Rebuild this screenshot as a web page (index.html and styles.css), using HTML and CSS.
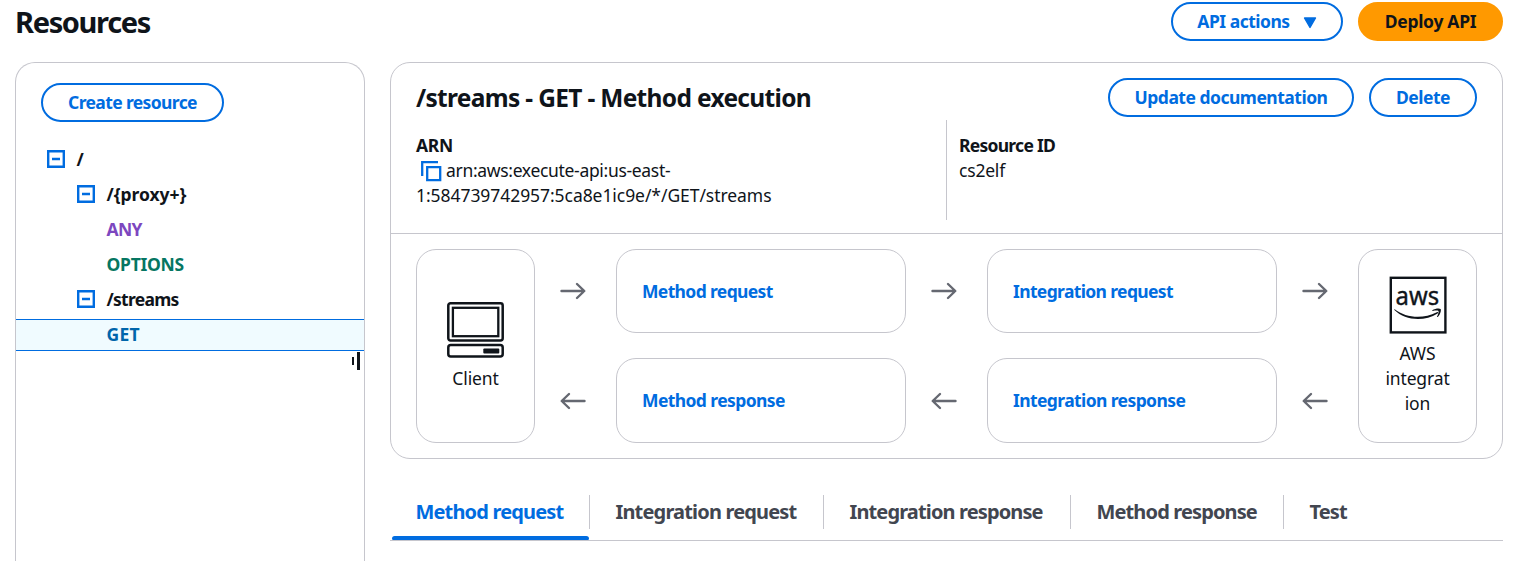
FILE: index.html
```html
<!DOCTYPE html>
<html lang="en">
<head>
<meta charset="utf-8">
<title>Resources</title>
<link rel="stylesheet" href="styles.css">
</head>
<body>
<svg class="defs" width="0" height="0">
  <symbol id="collapse" viewBox="0 0 18 18"><path d="M1.2 1.2H16.8V16.8H1.2ZM5 9H13" fill="none" stroke="currentColor" stroke-width="2.4"/></symbol>
  <symbol id="right" viewBox="0 0 26 18"><path d="M1.5 9H24M17 2L24.3 9L17 16" fill="none" stroke="currentColor" stroke-width="2.4" stroke-linecap="round" stroke-linejoin="round"/></symbol>
  <symbol id="left" viewBox="0 0 26 18"><path d="M24.5 9H2M9 2L1.7 9L9 16" fill="none" stroke="currentColor" stroke-width="2.4" stroke-linecap="round" stroke-linejoin="round"/></symbol>
</svg>
<header class="page-header">
  <h1>Resources</h1>
  <div class="actions">
    <button class="btn api"><span>API actions</span><svg width="14" height="12" viewBox="0 0 14 12"><path d="M1.5 1H12.5L7 10.5Z" fill="currentColor" stroke="currentColor" stroke-width="1.4" stroke-linejoin="round"/></svg></button>
    <button class="btn primary"><span>Deploy API</span></button>
  </div>
</header>
<div class="columns">
  <aside class="sidebar">
    <button class="btn create"><span>Create resource</span></button>
    <ul class="tree">
      <li class="root"><svg><use href="#collapse"/></svg><span>/</span></li>
      <li class="path"><svg><use href="#collapse"/></svg><span class="proxy">/{proxy+}</span></li>
      <li class="method any"><span>ANY</span></li>
      <li class="method options"><span>OPTIONS</span></li>
      <li class="path"><svg><use href="#collapse"/></svg><span>/streams</span></li>
      <li class="method get"><span>GET</span></li>
    </ul>
    <div class="resize"><i class="short"></i><i class="long"></i></div>
  </aside>
  <main>
    <section class="panel">
      <div class="panel-head">
        <h2>/streams - GET - Method execution</h2>
        <div class="actions">
          <button class="btn update"><span>Update documentation</span></button>
          <button class="btn delete"><span>Delete</span></button>
        </div>
      </div>
      <dl class="details">
        <div class="arn">
          <dt>ARN</dt>
          <dd><svg class="copy" viewBox="0 0 21 21"><path d="M1.2 15V1.2H17M6.2 6.2H19.2V19.2H6.2Z" fill="none" stroke="currentColor" stroke-width="2.3"/></svg><span class="arn-a">arn:aws:execute-api:us-east-</span><br>1:584739742957:5ca8e1ic9e/*/GET/streams</dd>
        </div>
        <div class="rid"><dt class="rid-label">Resource ID</dt><dd class="rid-value">cs2elf</dd></div>
      </dl>
      <div class="flow">
        <div class="node end">
          <svg width="58" height="58" viewBox="0.7 -0.2 58 58" fill="none" stroke="#0f141a"><rect x="2" y="2" width="54.4" height="37.2" rx="2.2" stroke-width="2.5"/><rect x="6.6" y="6.6" width="45.4" height="28.4" stroke-width="2.3"/><rect x="2" y="43.8" width="54.4" height="11.4" rx="2.5" stroke-width="2.5"/><rect x="37" y="47.2" width="16" height="5" rx="1" fill="#0f141a" stroke="none"/></svg>
          <span>Client</span>
        </div>
        <svg class="arrow"><use href="#right"/></svg>
        <a class="node mreq">Method request</a>
        <svg class="arrow"><use href="#right"/></svg>
        <a class="node ireq">Integration request</a>
        <svg class="arrow"><use href="#right"/></svg>
        <div class="node end aws">
          <svg width="58" height="58" viewBox="-1 -1 58 58"><rect x=".8" y=".8" width="54.6" height="54.6" fill="none" stroke="#0f141a" stroke-width="2.4"/><text class="aws-word" x="5.6" y="28" textLength="43.5" lengthAdjust="spacingAndGlyphs">aws</text><path d="M4.7 32.2C16 41 33 42.2 46.8 35.2C48 34.7 48.6 35.7 47.6 36.4C34 45 15 43.5 4.4 33Q4 32 4.7 32.2Z" fill="#0f141a"/><path d="M42.3 33.2C45 31.4 49.6 31 50.6 32C51.5 33.2 50.2 37.8 47.8 39.9C47.2 40.3 46.8 40 47.1 39.4C48.2 37 49 34.8 48.4 34C47.8 33.3 45.2 33.5 42.7 33.9Q41.9 33.8 42.3 33.2Z" fill="#0f141a"/></svg>
          <span>AWS integration</span>
        </div>
        <svg class="arrow"><use href="#left"/></svg>
        <a class="node mres">Method response</a>
        <svg class="arrow"><use href="#left"/></svg>
        <a class="node ires">Integration response</a>
        <svg class="arrow"><use href="#left"/></svg>
      </div>
    </section>
    <nav class="tabs">
      <a class="tab active">Method request</a>
      <a class="tab t2">Integration request</a>
      <a class="tab t3">Integration response</a>
      <a class="tab t4">Method response</a>
      <a class="tab t5">Test</a>
    </nav>
  </main>
</div>
</body>
</html>
```
FILE: styles.css
```css
* { box-sizing: border-box; }
body {
  margin: 0;
  height: 561px;
  overflow: hidden;
  background: #fff;
  color: #0f141a;
  font: 17.5px/25px "Noto Sans", "Open Sans", sans-serif;
}
h1, h2, dl, dd, ul { margin: 0; padding: 0; }
.defs { display: block; }
.page-header {
  display: flex;
  justify-content: space-between;
  height: 62px;
  padding: 2px 18px 0 15px;
}
h1 { font-size: 29px; line-height: 39px; font-weight: 700; letter-spacing: -1.35px; }
h2 { font-size: 24.5px; line-height: 39px; font-weight: 700; letter-spacing: -.68px; }
.actions { display: flex; gap: 15px; }
.btn {
  display: flex;
  align-items: center;
  justify-content: center;
  height: 39px;
  padding: 0;
  border: 2px solid #006ce0;
  border-radius: 20px;
  background: #fff;
  color: #006ce0;
  font: inherit;
  font-weight: 700;
}
.api { width: 172px; gap: 13px; letter-spacing: -.5px; }
.api svg { margin-top: 2px; }
.primary { width: 145px; background: #f90; border-color: #f90; color: #0f141a; letter-spacing: -.29px; }
.update { width: 246px; letter-spacing: -.5px; }
.delete { width: 108px; letter-spacing: -.5px; }
.create { width: 183px; margin-left: 25px; letter-spacing: -.62px; }
.columns { display: grid; grid-template-columns: 350px 1113px; gap: 25px; height: 499px; padding-left: 15px; }
.sidebar {
  height: 499px;
  padding-top: 20px;
  border: 1px solid #c6c6cd;
  border-bottom: 0;
  border-radius: 20px 20px 0 0;
}
.tree { list-style: none; margin-top: 20px; font-weight: 700; }
.tree li { display: flex; align-items: center; gap: 11.5px; height: 35px; padding-bottom: 1px; }
.tree svg { width: 18px; height: 18px; color: #006ce0; }
.tree .root { padding-left: 31px; }
.tree .path { padding-left: 61px; letter-spacing: -.73px; }
.tree .proxy { letter-spacing: -.05px; }
.tree .method { padding-left: 90.5px; }
.tree .any { color: #7d47bf; letter-spacing: -.67px; }
.tree .options { color: #067662; letter-spacing: -.28px; }
.tree .get {
  height: 32px;
  margin-top: 2px;
  padding-bottom: 1px;
  background: #f0fbff;
  border-top: 1px solid #006ce0;
  border-bottom: 1px solid #006ce0;
  color: #0065ab;
  letter-spacing: .3px;
}
.resize { display: flex; justify-content: flex-end; align-items: center; gap: 3px; padding: 1px 4px 0 0; }
.resize i { width: 3px; background: #0f141a; }
.resize .short { height: 8px; width: 2px; }
.resize .long { height: 18px; }
.panel { height: 397px; border: 1px solid #c6c6cd; border-radius: 20px; }
.panel-head { display: flex; justify-content: space-between; padding: 15px 25px 0; }
.details { display: grid; grid-template-columns: 530px 1fr; padding: 3px 0 13px 25px; border-bottom: 1px solid #c6c6cd; }
.details > div { height: 100px; padding-top: 13px; }
.details .rid { padding-left: 12px; border-left: 1px solid #c6c6cd; }
dt { font-weight: 700; letter-spacing: -.29px; }
.rid-label { letter-spacing: -.73px; }
.rid-value { letter-spacing: -.2px; }
.copy { width: 21px; height: 21px; margin: 0 4px 0 5px; vertical-align: -5px; color: #006ce0; }
.arn dd { line-height: 25px; letter-spacing: -.06px; }
.arn-a { letter-spacing: -.32px; }
.flow {
  display: grid;
  grid-template-columns: 119px 81px 290px 81px 290px 81px 119px;
  grid-template-rows: 84px 85px;
  row-gap: 25px;
  padding: 15px 25px 0;
}
.node {
  display: flex;
  align-items: center;
  padding: 0 25px;
  border: 1px solid #c6c6cd;
  border-radius: 20px;
  color: #006ce0;
  font-weight: 700;
}
.end { grid-row: 1 / 3; flex-direction: column; justify-content: center; gap: 7px; color: #0f141a; font-weight: 400; }
.end span { width: 66px; text-align: center; overflow-wrap: anywhere; letter-spacing: -.14px; }
.flow .aws { grid-column: 7; grid-row: 1 / 3; }
.aws-word { font: 26px "Noto Sans", sans-serif; fill: #0f141a; stroke: #0f141a; stroke-width: .4px; }
.arrow { width: 26px; height: 18px; margin-left: 24.5px; align-self: center; color: #656871; }
.mreq, .ireq { letter-spacing: -.64px; }
.mres, .ires { letter-spacing: -.6px; }
.tabs { display: flex; height: 46px; margin-top: 36px; border-bottom: 1px solid #c6c6cd; font-size: 20px; font-weight: 700; color: #424650; }
.tab { height: 34px; line-height: 34px; padding-left: 25.5px; border-right: 1px solid #c6c6cd; white-space: nowrap; }
.active { position: relative; width: 200px; color: #006ce0; letter-spacing: -.84px; }
.active::after { content: ""; position: absolute; left: 2px; right: 0; top: 41px; height: 4px; border-radius: 4px 4px 2px 2px; background: #006ce0; }
.t2 { width: 234px; letter-spacing: -.83px; }
.t3 { width: 247px; letter-spacing: -.87px; }
.t4 { width: 213px; letter-spacing: -.87px; }
.t5 { border: 0; letter-spacing: -.9px; }
```
